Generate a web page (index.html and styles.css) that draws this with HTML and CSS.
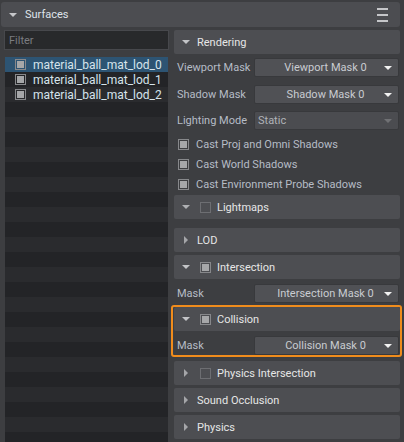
FILE: index.html
```html
<!DOCTYPE html>
<html>
<head>
<meta charset="utf-8">
<link rel="stylesheet" href="styles.css">
</head>
<body>
<div class="titlebar">
  <span class="tri"></span>
  <span class="title">Surfaces</span>
  <span class="menu"><i></i><i></i><i></i></span>
</div>
<div class="content">
  <div class="left">
    <input class="filter" type="text" placeholder="Filter">
    <div class="list">
      <div class="item selected"><span class="cb checked"></span><span>material_ball_mat_lod_0</span></div>
      <div class="item"><span class="cb checked"></span><span>material_ball_mat_lod_1</span></div>
      <div class="item"><span class="cb checked"></span><span>material_ball_mat_lod_2</span></div>
    </div>
  </div>
  <div class="right">
    <div class="hdr"><span class="arrow down"></span><span>Rendering</span></div>
    <div class="prop first"><span class="label">Viewport Mask</span><div class="combo"><span class="val">Viewport Mask 0</span><i class="caret"></i></div></div>
    <div class="prop second"><span class="label">Shadow Mask</span><div class="combo"><span class="val">Shadow Mask 0</span><i class="caret"></i></div></div>
    <div class="prop third"><span class="label">Lighting Mode</span><div class="combo disabled"><span class="val">Static</span><i class="caret"></i></div></div>
    <div class="check firstcheck"><span class="cb checked"></span><span>Cast Proj and Omni Shadows</span></div>
    <div class="check"><span class="cb checked"></span><span>Cast World Shadows</span></div>
    <div class="check"><span class="cb checked"></span><span>Cast Environment Probe Shadows</span></div>
    <div class="hdr lightmaps"><span class="arrow down dim"></span><span class="hcb"></span><span>Lightmaps</span></div>
    <div class="hdr lod"><span class="arrow right"></span><span>LOD</span></div>
    <div class="hdr stack"><span class="arrow down"></span><span class="hcb checked"></span><span>Intersection</span></div>
    <div class="prop mask"><span class="label">Mask</span><div class="combo"><span class="val">Intersection Mask 0</span><i class="caret"></i></div></div>
    <div class="group">
      <div class="hdr"><span class="arrow down"></span><span class="hcb checked"></span><span>Collision</span></div>
      <div class="prop mask"><span class="label">Mask</span><div class="combo"><span class="val">Collision Mask 0</span><i class="caret"></i></div></div>
    </div>
    <div class="hdr after"><span class="arrow right"></span><span class="hcb"></span><span>Physics Intersection</span></div>
    <div class="hdr stack"><span class="arrow right"></span><span>Sound Occlusion</span></div>
    <div class="hdr stack"><span class="arrow right"></span><span>Physics</span></div>
  </div>
</div>
</body>
</html>
```

FILE: styles.css
```css
html, body {
  margin: 0;
  padding: 0;
}
body {
  background: #3d3e41;
  width: 404px;
  height: 442px;
  overflow: hidden;
  font-family: Roboto, "Liberation Sans", sans-serif;
  font-size: 11px;
  color: #b6bcc6;
}

/* title bar */
.titlebar {
  margin: 2px 4px 0 1px;
  height: 25px;
  box-sizing: border-box;
  background: #4c4d51;
  border-radius: 3px;
  display: flex;
  align-items: center;
  padding: 0 12px 0 8px;
}
.tri {
  width: 0;
  height: 0;
  border-left: 4px solid transparent;
  border-right: 4px solid transparent;
  border-top: 4px solid #c6c7ca;
  margin-right: 8px;
}
.title {
  flex: 1;
  color: #dfe3ea;
}
.menu {
  display: flex;
  flex-direction: column;
  gap: 4px;
}
.menu i {
  display: block;
  width: 11px;
  height: 2px;
  background: #c5c6c9;
}

/* layout */
.content {
  display: flex;
  gap: 5px;
  padding: 3px 4px 0 4px;
}
.left {
  width: 165px;
  display: flex;
  flex-direction: column;
}
.filter {
  display: block;
  margin: 0;
  width: 165px;
  height: 20px;
  box-sizing: border-box;
  border: 1px solid #47484c;
  background: #28292b;
  padding: 0 0 0 4px;
  font-family: Roboto, "Liberation Sans", sans-serif;
  font-size: 11px;
  color: #c8c8c8;
  outline: none;
}
.filter::placeholder {
  color: #7b7c80;
}
.list {
  margin: 7px 1px 0 1px;
  height: 390px;
  background: repeating-linear-gradient(to bottom, #2a2b2e 0, #2a2b2e 15px, #232427 15px, #232427 30px);
}
.item {
  height: 15px;
  display: flex;
  align-items: center;
  padding-left: 10px;
  gap: 7px;
  font-size: 12px;
  color: #d6e4ec;
}
.item.selected {
  background: #2d5473;
}

/* checkboxes */
.cb {
  display: block;
  width: 11px;
  height: 11px;
  box-sizing: border-box;
  border: 1px solid #87888b;
  padding: 1px;
  flex-shrink: 0;
}
.cb.checked::after,
.hcb.checked::after {
  content: "";
  display: block;
  width: 7px;
  height: 7px;
  background: #a6a7a9;
}

/* right panel */
.right {
  width: 226px;
  display: flex;
  flex-direction: column;
}
.hdr {
  height: 24px;
  flex-shrink: 0;
  box-sizing: border-box;
  background: #4d4e52;
  border-radius: 2px;
  display: flex;
  align-items: center;
  padding-left: 8px;
  color: #e6e6e6;
}
.arrow {
  width: 8px;
  height: 8px;
  display: flex;
  align-items: center;
  justify-content: center;
  margin-right: 7px;
  flex-shrink: 0;
}
.arrow.down::before {
  content: "";
  border-left: 4px solid transparent;
  border-right: 4px solid transparent;
  border-top: 4px solid #c3c4c7;
}
.arrow.down.dim::before {
  border-top-color: #aeafb2;
}
.arrow.right::before {
  content: "";
  border-top: 4px solid transparent;
  border-bottom: 4px solid transparent;
  border-left: 4px solid #a5a6a9;
}
.hcb {
  display: block;
  width: 11px;
  height: 11px;
  box-sizing: border-box;
  border: 1px solid #6d6e72;
  padding: 1px;
  margin: 0 6px 0 3px;
  flex-shrink: 0;
}
.hcb.checked {
  border-color: #87888b;
}

.prop {
  display: flex;
  align-items: center;
  height: 19px;
  flex-shrink: 0;
}
.prop.first { margin-top: 4px; }
.prop.second { margin-top: 8px; }
.prop.third { margin-top: 7px; }
.prop.mask { margin-top: 5px; }
.label {
  width: 80px;
  padding-left: 3px;
  box-sizing: border-box;
  color: #b6bcc6;
}
.combo {
  width: 145px;
  height: 19px;
  box-sizing: border-box;
  border: 1px solid #38393c;
  border-radius: 2px;
  background: #505155;
  display: grid;
  grid-template-columns: 1fr;
  grid-template-rows: 1fr;
  align-items: center;
  padding-right: 2px;
  color: #c9ccd1;
}
.combo .val,
.combo .caret {
  grid-column: 1;
  grid-row: 1;
}
.combo .val {
  justify-self: center;
}
.combo .caret {
  justify-self: end;
  width: 0;
  height: 0;
  margin-right: 4px;
  border-left: 4px solid transparent;
  border-right: 4px solid transparent;
  border-top: 4px solid #f2f2f2;
}
.combo.disabled {
  background: #4b4c50;
  color: #b0b3b8;
}
.combo.disabled .val {
  justify-self: start;
  padding-left: 3px;
}
.combo.disabled .caret {
  border-top-color: #707174;
}

.check {
  height: 20px;
  display: flex;
  align-items: center;
  padding-left: 4px;
  gap: 7px;
  flex-shrink: 0;
}
.check.firstcheck { margin-top: 4px; }

.hdr.lightmaps { margin-top: 1px; }
.hdr.lod { margin-top: 9px; }
.hdr.stack { margin-top: 3px; }
.hdr.after { margin-top: 4px; }

.group {
  margin: 2px -2px 0 -3px;
  border: 2px solid #f08c1c;
  border-radius: 3px;
  padding-left: 1px;
  flex-shrink: 0;
}
```
